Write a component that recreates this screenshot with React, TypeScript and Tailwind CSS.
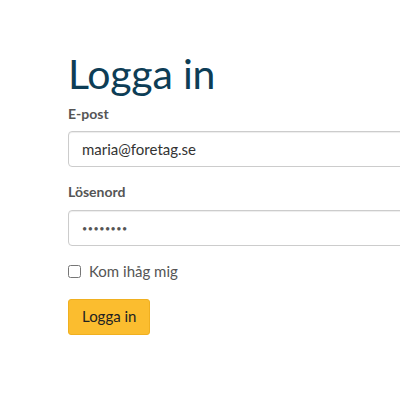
import React from 'react';

export default function App() {
  return (
    <div className="w-[400px] h-[400px] overflow-hidden bg-white" style={{ fontFamily: 'Lato, "Open Sans", sans-serif' }}>
      <div className="pl-[68px] pt-[50px] w-[480px]">
        <h1 className="text-[41px] leading-[48px] text-[#0d3d56] font-normal tracking-[-0.2px]">Logga in</h1>
        <form className="mt-[6px]">
          <label className="block text-[14px] font-bold text-[#555] leading-[20px] mb-[7px]">E-post</label>
          <input
            type="text"
            defaultValue="maria@foretag.se"
            className="block w-full h-[36px] px-[13px] text-[15px] text-[#333] border border-[#ccc] rounded-[4px] shadow-[inset_0_1px_1px_rgba(0,0,0,0.075)] outline-none"
          />
          <label className="block text-[14px] font-bold text-[#555] leading-[20px] mt-[15px] mb-[8px]">Lösenord</label>
          <input
            type="password"
            defaultValue="12345678"
            className="block w-full h-[36px] px-[13px] text-[9px] tracking-[0.5px] text-[#555] border border-[#ccc] rounded-[4px] shadow-[inset_0_1px_1px_rgba(0,0,0,0.075)] outline-none"
          />
          <label className="flex items-center gap-[8px] mt-[14px] text-[15px] text-[#555]">
            <input type="checkbox" className="w-[13px] h-[13px] m-0" />
            Kom ihåg mig
          </label>
          <button type="button" className="mt-[16px] h-[36px] px-[13px] bg-[#fbbd2f] border border-[#f0b020] rounded-[3px] text-[15px] text-[#222]">
            Logga in
          </button>
        </form>
      </div>
    </div>
  );
}
